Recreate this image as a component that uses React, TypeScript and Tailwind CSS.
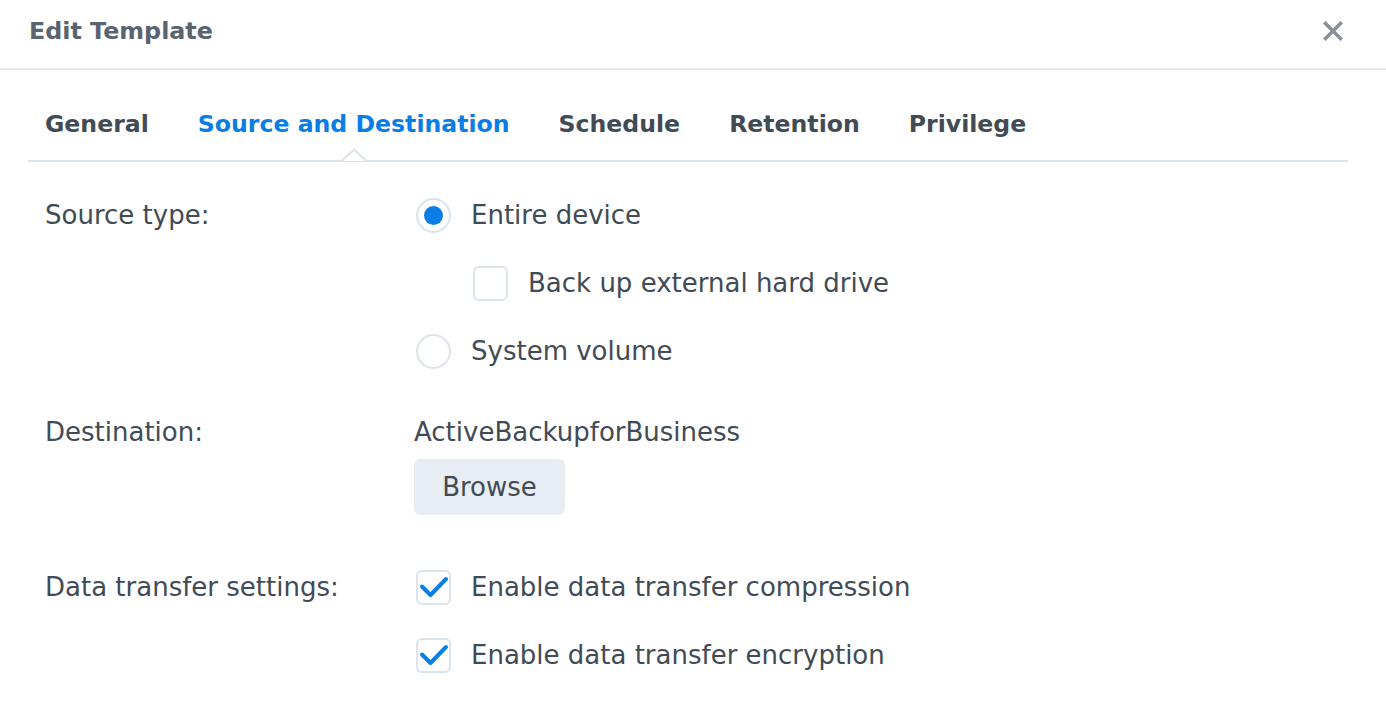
import React from "react";

const Radio = ({ checked }: { checked?: boolean }) => (
  <span className="flex h-[35px] w-[35px] shrink-0 items-center justify-center rounded-full border-2 border-[#dbe3ec] bg-white">
    {checked && <span className="h-[19px] w-[19px] rounded-full bg-[#0a7ee6]" />}
  </span>
);

const Check = ({ checked }: { checked?: boolean }) => (
  <span className="flex h-[35px] w-[35px] shrink-0 items-center justify-center rounded-[6px] border-2 border-[#dbe3ec] bg-white">
    {checked && (
      <svg className="shrink-0" width="35" height="35" viewBox="0 0 35 35" fill="none">
        <path d="M6 16.5l8.5 8.5L30 9" stroke="#0a7ee6" strokeWidth="4" strokeLinecap="round" strokeLinejoin="round" />
      </svg>
    )}
  </span>
);

const Option = ({ children, control }: { children: React.ReactNode; control: React.ReactNode }) => (
  <div className="flex h-[35px] items-center gap-[20px]">
    {control}
    <span>{children}</span>
  </div>
);

export default function App() {
  const tabs = ["General", "Source and Destination", "Schedule", "Retention", "Privilege"];
  return (
    <div className="h-[724px] w-[1386px] bg-white text-[26px] leading-[35px] text-[#414b55]" style={{ fontFamily: '"DejaVu Sans", Verdana, sans-serif' }}>
      <div className="flex h-[70px] items-center justify-between border-b-2 border-[#e3e8ef] pb-[6px] pl-[29px] pr-[43px]">
        <h1 className="text-[23.8px] font-bold text-[#5a636e]">Edit Template</h1>
        <svg width="20" height="20" viewBox="0 0 20 20">
          <path d="M2.5 2.5l15 15M17.5 2.5l-15 15" stroke="#8a9099" strokeWidth="3.6" strokeLinecap="square" />
        </svg>
      </div>

      <div className="pl-[28px] pr-[38px]">
        <div className="relative flex h-[92px] items-end gap-[49px] border-b-2 border-[#dbe3ec] pb-[18px] pl-[17px] text-[23.6px] font-bold">
          {tabs.map((t, i) => (
            <span key={t} className={i === 1 ? "relative text-[#0a7ee6]" : "text-[#414b55]"}>
              {t}
              {i === 1 && (
                <svg className="absolute -bottom-[20px] left-1/2 -translate-x-1/2" width="30" height="14" viewBox="0 0 30 14">
                  <path d="M0 13h2.5L15 1.5 27.5 13H30" fill="white" stroke="#dbe3ec" strokeWidth="2" />
                </svg>
              )}
            </span>
          ))}
        </div>

        <div className="grid grid-cols-[371px_1fr] pl-[17px]">
          <div className="pt-[36px]">Source type:</div>
          <div className="flex flex-col gap-[33px] pt-[36px]">
            <Option control={<Radio checked />}>Entire device</Option>
            <div className="pl-[57px]">
              <Option control={<Check />}>Back up external hard drive</Option>
            </div>
            <Option control={<Radio />}>System volume</Option>
          </div>

          <div className="pt-[46px]">Destination:</div>
          <div className="flex flex-col items-start pt-[46px]">
            <span className="-ml-[2px]">ActiveBackupforBusiness</span>
            <button className="-ml-[2px] mt-[9px] h-[56px] w-[151px] rounded-[6px] bg-[#e8edf4] text-[26px] text-[#414b55]">
              Browse
            </button>
          </div>

          <div className="pt-[55px]">Data transfer settings:</div>
          <div className="flex flex-col gap-[33px] pt-[55px]">
            <Option control={<Check checked />}>Enable data transfer compression</Option>
            <Option control={<Check checked />}>Enable data transfer encryption</Option>
          </div>
        </div>
      </div>
    </div>
  );
}
